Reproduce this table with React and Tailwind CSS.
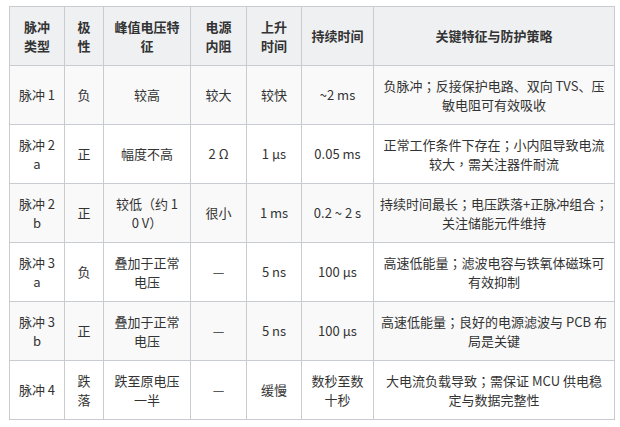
import React from "react";

const header = [
  ["脉冲", "类型"],
  ["极", "性"],
  ["峰值电压特", "征"],
  ["电源", "内阻"],
  ["上升", "时间"],
  ["持续时间"],
  ["关键特征与防护策略"],
];

const rows = [
  [["脉冲 1"], ["负"], ["较高"], ["较大"], ["较快"], ["~2 ms"], ["负脉冲；反接保护电路、双向 TVS、压", "敏电阻可有效吸收"]],
  [["脉冲 2", "a"], ["正"], ["幅度不高"], ["2 Ω"], ["1 μs"], ["0.05 ms"], ["正常工作条件下存在；小内阻导致电流", "较大，需关注器件耐流"]],
  [["脉冲 2", "b"], ["正"], ["较低（约 1", "0 V）"], ["很小"], ["1 ms"], ["0.2 ~ 2 s"], ["持续时间最长；电压跌落+正脉冲组合；", "关注储能元件维持"]],
  [["脉冲 3", "a"], ["负"], ["叠加于正常", "电压"], ["—"], ["5 ns"], ["100 μs"], ["高速低能量；滤波电容与铁氧体磁珠可", "有效抑制"]],
  [["脉冲 3", "b"], ["正"], ["叠加于正常", "电压"], ["—"], ["5 ns"], ["100 μs"], ["高速低能量；良好的电源滤波与 PCB 布", "局是关键"]],
  [["脉冲 4"], ["跌", "落"], ["跌至原电压", "一半"], ["—"], ["缓慢"], ["数秒至数", "十秒"], ["大电流负载导致；需保证 MCU 供电稳", "定与数据完整性"]],
];

const widths = [55, 39, 87, 56, 55, 72, 241];

function Text({ s }) {
  const parts = s.split(/([；，（）])/);
  return parts.map((p, i) =>
    /^[；，（）]$/.test(p) ? (
      <span key={i} className="font-['Noto_Sans_CJK_TC',sans-serif]">
        {p}
      </span>
    ) : (
      <React.Fragment key={i}>{p}</React.Fragment>
    )
  );
}

function Lines({ lines }) {
  return lines.map((l, i) => (
    <React.Fragment key={i}>
      {i > 0 && <br />}
      <Text s={l} />
    </React.Fragment>
  ));
}

export default function App() {
  return (
    <div
      className="w-[620px] h-[427px] bg-white pl-[9px] pt-[6px]"
      style={{ fontFamily: '"Noto Sans CJK SC", "Open Sans", sans-serif' }}
    >
      <table className="table-fixed border-collapse w-[606px] text-[13px] leading-[19.5px] text-[#333]">
        <colgroup>
          {widths.map((w, i) => (
            <col key={i} style={{ width: w }} />
          ))}
        </colgroup>
        <thead>
          <tr className="h-[59px] bg-[#eef0f2]">
            {header.map((h, i) => (
              <th
                key={i}
                className="border border-[#c8cbcf] px-[6px] text-center align-middle font-bold whitespace-nowrap text-[#333]"
              >
                <Lines lines={h} />
              </th>
            ))}
          </tr>
        </thead>
        <tbody>
          {rows.map((r, ri) => (
            <tr key={ri} className={`h-[59px] ${ri % 2 === 0 ? "bg-[#f9f9f9]" : "bg-white"}`}>
              {r.map((c, ci) => (
                <td
                  key={ci}
                  className="border border-[#c8cbcf] px-[6px] text-center align-middle whitespace-nowrap"
                >
                  <Lines lines={c} />
                </td>
              ))}
            </tr>
          ))}
        </tbody>
      </table>
    </div>
  );
}
